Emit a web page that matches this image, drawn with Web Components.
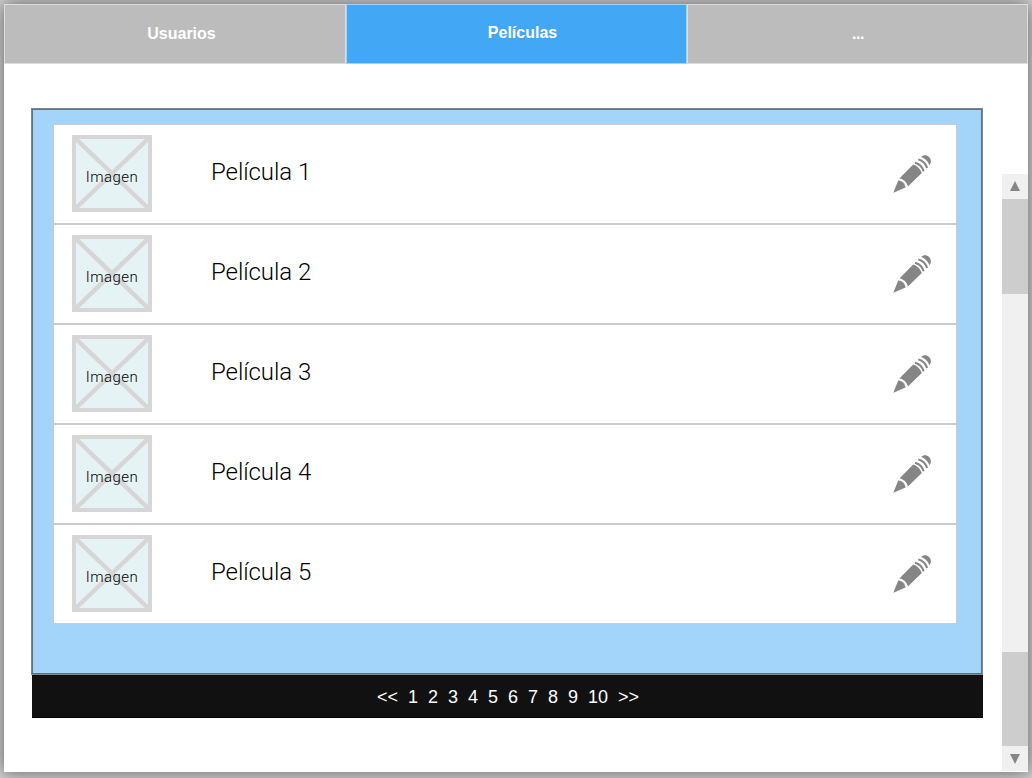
<!DOCTYPE html>
<html lang="es">
<head>
<meta charset="utf-8">
<title>Películas</title>
<style>
html,body{margin:0;height:100%}
body{font-family:"Liberation Sans",Arial,sans-serif;background:#d6d6d6;overflow:hidden}
</style>
</head>
<body>
<app-window>
  <tab-bar slot="tabs">
    <tab-item>Usuarios</tab-item>
    <tab-item active>Películas</tab-item>
    <tab-item more>...</tab-item>
  </tab-bar>
  <movie-panel>
    <movie-row>Película 1</movie-row>
    <movie-row>Película 2</movie-row>
    <movie-row>Película 3</movie-row>
    <movie-row>Película 4</movie-row>
    <movie-row>Película 5</movie-row>
  </movie-panel>
  <page-nav></page-nav>
  <scroll-rail slot="rail"></scroll-rail>
</app-window>
<script>
const define = (name, html) => customElements.define(name, class extends HTMLElement {
  constructor() {
    super();
    this.attachShadow({mode: 'open'}).innerHTML = html;
  }
});

define('app-window', `
<style>
:host{display:block;box-sizing:border-box;height:778px;padding:4px 4px 6px}
.win{height:768px;background:#fff;display:flex;flex-direction:column;box-shadow:0 0 18px 2px rgba(0,0,0,.5)}
.body{flex:1;display:flex;justify-content:space-between}
main{width:952px;padding:44px 0 0 27px}
</style>
<div class="win"><slot name="tabs"></slot><div class="body"><main><slot></slot></main><slot name="rail"></slot></div></div>`);

define('tab-bar', `
<style>:host{display:grid;grid-template-columns:342px 341px 341px;height:60px}</style><slot></slot>`);

define('tab-item', `
<style>
:host{display:flex;align-items:center;justify-content:center;box-sizing:border-box;padding-top:0;padding-left:13px;background:#bcbcbc;border:1px solid rgba(255,255,255,.5);color:#fff;font-weight:700;font-size:16px;line-height:18px}
:host([active]){background:#42a7f5;padding:0 0 2px 12px}
:host([more]){padding-left:1px;letter-spacing:-.4px}
</style><slot></slot>`);

define('movie-panel', `
<style>
:host{display:block;box-sizing:border-box;height:567px;border:1px solid #868686;background:#a3d4f9;box-shadow:inset 0 0 0 1px #55758c;padding:15px 25px 0 21px}
</style><slot></slot>`);

define('movie-row', `
<style>
:host{display:flex;box-sizing:border-box;height:100px;border:1px solid #cbcbcb;background:#fff;padding:10px 24px 0 18px;align-items:flex-start}
.title{font:300 24px/28px Roboto,sans-serif;letter-spacing:-.06px;color:#000;margin:23px auto 0 59px}
.pencil{display:block;margin-top:19px}
</style>
<image-thumb></image-thumb><span class="title"><slot></slot></span>
<svg class="pencil" width="40" height="40" viewBox="0 0 40 40">
  <g fill="#858585">
    <path d="M1.3 38.7 6.2 26.6C9.9 26.7 13 29.8 13.5 33.4Z"/>
    <path d="M7.4 24.4 21.2 10.4C25.2 11.5 28.6 15 29.8 19L15.9 32.6C15.1 28.2 11.9 25.1 7.4 24.4Z"/>
    <path d="M29.1 2.9C31.5.5 34.7.7 37.1 3 39.5 5.4 39.6 8.9 37.4 11.2 36.2 7.4 33 4.1 29.1 2.9Z"/>
  </g>
  <g fill="none" stroke="#858585" stroke-width="2">
    <path d="M23 8.7C27.2 9.9 30.5 13.2 31.6 17.2M26.3 5.4C30.5 6.6 33.9 10 35.1 14"/>
  </g>
</svg>`);

define('image-thumb', `
<style>
:host{display:grid;width:80px;height:77px;position:relative}
svg,span{grid-area:1/1}
svg{display:block}
span{font:300 15px/20px Roboto,sans-serif;letter-spacing:.5px;color:#000;align-self:center;text-align:center;padding-top:6px;z-index:1}
</style>
<svg width="80" height="77"><rect x="2" y="2" width="76" height="73" fill="#e5f3f4"/><path d="M3 3 77 74M77 3 3 74" stroke="#d6d6d6" stroke-width="4.5"/><rect x="2" y="2" width="76" height="73" fill="none" stroke="#d6d6d6" stroke-width="4"/></svg>
<span>Imagen</span>`);

define('page-nav', `
<style>
:host{display:flex;box-sizing:border-box;height:43px;margin-left:1px;background:#111;border-bottom:1px solid #080008;color:#fff;font-size:18px;line-height:20px;justify-content:center;gap:10px;padding:12px 0 0 1px}
</style>
${['&lt;&lt;',1,2,3,4,5,6,7,8,9,10,'&gt;&gt;'].map(t => `<span>${t}</span>`).join('')}`);

define('scroll-rail', `
<style>
:host{display:flex;flex-direction:column;width:26px;height:597px;margin-top:110px;background:#f0f0f0}
.btn{height:25px;box-sizing:border-box;display:flex;align-items:center;justify-content:center}
.up{padding-bottom:1px}
.thumb{background:#cdcdcd;height:95px}
.end{height:94px}
.track{flex:1}
</style>
<div class="btn up"><svg width="10" height="10"><path d="M0 10 5 0 10 10Z" fill="#868686"/></svg></div>
<div class="thumb"></div><div class="track"></div><div class="thumb end"></div>
<div class="btn"><svg width="10" height="10"><path d="M0 0 5 10 10 0Z" fill="#868686"/></svg></div>`);
</script>
</body>
</html>
